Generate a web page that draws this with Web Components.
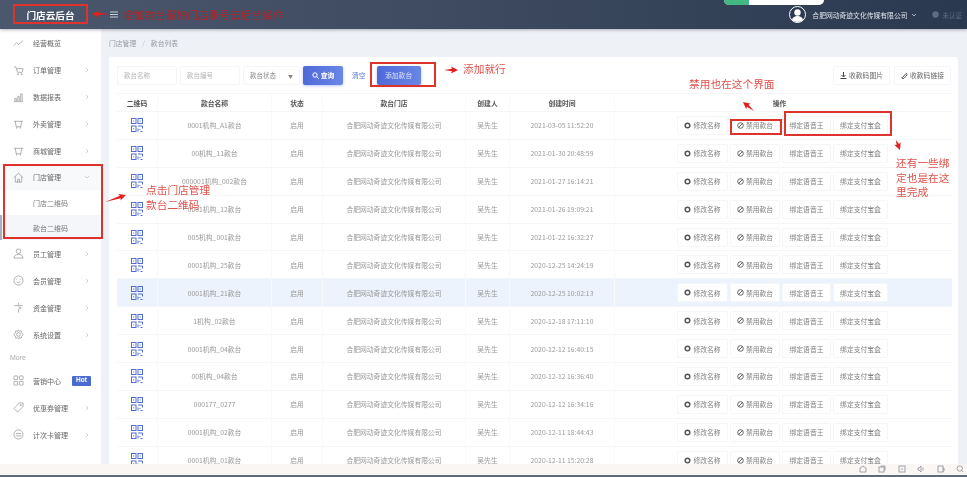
<!DOCTYPE html>
<html lang="zh">
<head>
<meta charset="utf-8">
<title>门店云后台</title>
<style>
  html, body { margin: 0; height: 477px; overflow: hidden; }
  body {
    position: relative;
    display: flex;
    flex-direction: column;
    background: #eef1f6;
    font-family: "Noto Sans CJK SC", "Liberation Sans", sans-serif;
    font-size: 7px;
    color: #777;
    filter: blur(0.45px);
  }
  .main { display: flex; height: 435px; overflow: hidden; }
  .content { flex: 1; min-width: 0; display: flex; flex-direction: column; padding: 0 9px 0 8px; }
</style>
</head>
<body>
  <top-bar></top-bar>
  <div class="main">
    <side-nav>
      <nav-item icon="trend" plain>经营概览</nav-item>
      <nav-item icon="cart">订单管理</nav-item>
      <nav-item icon="chart">数据报表</nav-item>
      <nav-item icon="shop">外卖管理</nav-item>
      <nav-item icon="shop">商城管理</nav-item>
      <nav-item icon="home" open>门店管理</nav-item>
      <nav-sub>门店二维码</nav-sub>
      <nav-sub active>款台二维码</nav-sub>
      <nav-item icon="user">员工管理</nav-item>
      <nav-item icon="smile">会员管理</nav-item>
      <nav-item icon="yen">资金管理</nav-item>
      <nav-item icon="gear">系统设置</nav-item>
      <nav-label>More</nav-label>
      <nav-item icon="grid" hot>营销中心</nav-item>
      <nav-item icon="tag">优惠券管理</nav-item>
      <nav-item icon="card">计次卡管理</nav-item>
    </side-nav>
    <div class="content">
      <page-crumb></page-crumb>
      <desk-list></desk-list>
    </div>
  </div>
  <bottom-strip></bottom-strip>
  <guide-overlay></guide-overlay>

<script>
const ICONS = {
  trend: '<path d="M1 8l3-3 2 2 5-4"/>',
  cart: '<path d="M1 2h2l2 6h5l1-4H4"/><circle cx="5.5" cy="10" r=".6"/><circle cx="9.5" cy="10" r=".6"/>',
  chart: '<path d="M1 10.5h10M2 10V7h1.6v3M5.2 10V5h1.6v5M8.4 10V2h1.6v8"/>',
  shop: '<path d="M1 2.5h10M2.5 2.5l1 6h5l1-6M4 8.5v2M8 8.5v2"/>',
  home: '<path d="M1 6l5-4.5L11 6M2.5 5v6h7V5M5 11V8h2v3"/>',
  user: '<circle cx="6" cy="3.5" r="2.5"/><path d="M1 11c.5-3 2.5-4 5-4s4.500 1 5 4z"/>',
  smile: '<circle cx="6" cy="6" r="5"/><path d="M4 7.500c1 1 3 1 4 0M4 4v1M8 4v1"/>',
  yen: '<path d="M6 1v2M1 4.500c1-1 9-1 10 0M6 5l3 1.500-3 1.500v3.500"/>',
  gear: '<circle cx="6" cy="6" r="2"/><path d="M6 1l1 1.500 2-.5.500 2L11 6l-1.500 2-.500 2-2-.500-1 1.500-1-1.500-2 .500-.500-2L1 6l1.500-2 .500-2 2 .500z"/>',
  grid: '<rect x="1" y="1" width="4" height="4" rx=".6"/><rect x="7" y="1" width="4" height="4" rx=".6"/><rect x="1" y="7" width="4" height="4" rx=".6"/><rect x="7" y="7" width="4" height="4" rx=".6"/>',
  tag: '<path d="M1 7l6-6h4v4l-6 6z"/><circle cx="8.500" cy="3.500" r=".7"/>',
  card: '<circle cx="6" cy="6" r="5"/><path d="M3 5h6M3 7.500h6"/>',
};

const fromHtml = (host, html) => {
  host.attachShadow({ mode: "open" }).innerHTML = html;
};

class TopBar extends HTMLElement {
  connectedCallback() {
    fromHtml(this, `
      <style>
        :host {
          display: flex; align-items: center; height: 29px; flex: none; position: relative; z-index: 2;
          background: linear-gradient(90deg, #4a576c 0%, #3e4b61 45%, #2b3950 100%);
          box-shadow: 0 1px 3px rgba(40,50,70,.35);
        }
        .logo { width: 101px; text-align: center; color: #fff; font-size: 9.6px; font-weight: 700; }
        .burger { margin-left: 9px; width: 8px; height: 7px; }
        .spacer { flex: 1; }
        .user { display: flex; align-items: center; gap: 6px; color: #dfe4ec; font-size: 6.800px; }
        .avatar { width: 17px; height: 17px; display: block; }
        .chev { width: 6px; height: 6px; margin-left: -3px; }
        .cert { display: flex; align-items: center; gap: 4px; margin: 0 5px 0 15px; color: #5f6c80; font-size: 6.500px; }
        .pill { position: absolute; left: 724px; top: 0; width: 100px; height: 5px; background: #fff; border-radius: 0 0 5px 5px; overflow: hidden; }
        .pill i { display: block; width: 25px; height: 100%; background: #43b883; }
      </style>
      <div class="logo">门店云后台</div>
      <svg class="burger" viewBox="0 0 8 7" stroke="#d5dae3" stroke-width=".9"><path d="M0 1h8M0 3.500h8M0 6h8"/></svg>
      <div class="spacer"></div>
      <div class="pill"><i></i></div>
      <div class="user">
        <svg class="avatar" viewBox="0 0 17 17"><circle cx="8.500" cy="8.500" r="8" fill="#2b3950" stroke="#fff"/><circle cx="8.500" cy="6.500" r="3.200" fill="#fff"/><path d="M3 14c.5-3 3-4 5.500-4s5 1 5.500 4c-3 2.500-8 2.500-11 0z" fill="#fff"/></svg>
        <span>合肥网动奇迹文化传媒有限公司</span>
        <svg class="chev" viewBox="0 0 6 6" fill="none" stroke="#c3cad6" stroke-width=".8"><path d="M1 2l2 2 2-2"/></svg>
      </div>
      <div class="cert">
        <svg width="7" height="7" viewBox="0 0 7 7"><circle cx="3.500" cy="3.500" r="3.200" fill="#5f6c80"/></svg>
        <span>未认证</span>
      </div>`);
  }
}

class SideNav extends HTMLElement {
  connectedCallback() {
    fromHtml(this, `
      <style>
        :host { display: flex; flex-direction: column; flex: none; width: 101px; padding-top: .5px; background: #fff; box-sizing: border-box; }
      </style>
      <slot></slot>`);
  }
}

class NavItem extends HTMLElement {
  connectedCallback() {
    const open = this.hasAttribute("open");
    const hot = this.hasAttribute("hot");
    const tail = this.hasAttribute("plain") ? "" : hot
      ? '<b class="hot">Hot</b>'
      : `<svg class="chev" viewBox="0 0 6 6"><path d="${open ? "M1 2l2 2 2-2" : "M2 1l2 2-2 2"}"/></svg>`;
    fromHtml(this, `
      <style>
        :host { display: flex; align-items: center; height: 27px; flex: none; padding-left: 13px; box-sizing: border-box; color: #666; font-size: 7px; position: relative; ${open ? "background:#f8f9fb;height:25.500px;" : ""} }
        .ico { width: 11px; height: 11px; fill: none; stroke: #888; stroke-width: .7; flex: none; }
        .txt { margin-left: 9px; }
        .chev { position: absolute; left: 84px; top: calc(50% - 3px); width: 6px; height: 6px; fill: none; stroke: #bbb; stroke-width: .7; }
        .hot { position: absolute; left: 72px; top: calc(50% - 5px); width: 19px; height: 10px; line-height: 10px; text-align: center; background: #4a6bd0; color: #fff; font: 700 6.500px "Liberation Sans", sans-serif; border-radius: 1px; }
      </style>
      <svg class="ico" viewBox="0 0 12 12">${ICONS[this.getAttribute("icon")] || ""}</svg>
      <span class="txt"><slot></slot></span>
      ${tail}`);
  }
}

class NavSub extends HTMLElement {
  connectedCallback() {
    const active = this.hasAttribute("active");
    fromHtml(this, `
      <style>
        :host { display: flex; align-items: center; height: 25px; flex: none; padding-left: 33px; color: #777; font-size: 7px; ${active ? "background:#f4f6fa;box-shadow: inset 2px 0 0 #a9b1c0;" : ""} }
      </style>
      <slot></slot>`);
  }
}

class NavLabel extends HTMLElement {
  connectedCallback() {
    fromHtml(this, `
      <style>
        :host { display: flex; align-items: center; height: 19px; padding-left: 10px; color: #aaa; font: 7px "Liberation Sans", sans-serif; }
      </style>
      <slot></slot>`);
  }
}

class PageCrumb extends HTMLElement {
  connectedCallback() {
    fromHtml(this, `
      <style>
        :host { display: flex; align-items: center; gap: 6px; height: 28px; flex: none; color: #969aa2; font-size: 6.800px; }
        i { font-style: normal; color: #c0c4cc; }
      </style>
      <span>门店管理</span><i>/</i><span>款台列表</span>`);
  }
}

class ToolButton extends HTMLElement {
  connectedCallback() {
    const kind = this.getAttribute("kind") || "plain";
    fromHtml(this, `
      <style>
        :host { display: inline-flex; align-items: center; justify-content: center; gap: 2px; height: 19px; box-sizing: border-box; border-radius: 2px; font-size: 6.800px; flex: none; white-space: nowrap; }
        :host([kind="plain"]) { background: #fff; border: 1px solid #f5f6f8; color: #808080; }
        :host([kind="primary"]) { background: linear-gradient(90deg, #4f6ad8, #6a86e6); color: #d8e0f8; box-shadow: 0 1px 3px rgba(80,110,220,.4); }
        svg { flex: none; }
      </style>
      <slot name="icon"></slot><slot></slot>`);
    this.setAttribute("kind", kind);
  }
}

class DeskRow extends HTMLElement {
  static columns = "41px 114px 51px 143px 44px 105px 1fr";
  connectedCallback() {
    const head = this.hasAttribute("head");
    const cols = (this.dataset.cols || "").split("|");
    const cells = cols.map((c, i) => {
      if (!head && i === 0) {
        return `<div class="cell"><svg width="12" height="14" viewBox="0 0 12 14" fill="none" stroke="#4f6ed0" stroke-width="1"><rect x=".5" y=".5" width="4.500" height="5"/><rect x="7" y=".5" width="4.500" height="5"/><rect x=".5" y="8" width="4.500" height="5.500"/><path d="M2.700 2.500v1M9.200 2.500v1M2.700 10.300v1M7 8h4.500v2.500M7 10.500v3M9.500 13.500h2M9 11v1"/></svg></div>`;
      }
      return `<div class="cell">${c}</div>`;
    }).join("");
    const actions = head ? '<div class="cell">操作</div>' : `
      <div class="actions">
        <tool-button kind="plain" style="width:51px"><svg slot="icon" width="7" height="7" viewBox="0 0 7 7"><circle cx="3.500" cy="3.500" r="2.300" fill="none" stroke="#555" stroke-width="1.500"/></svg>修改名称</tool-button>
        <tool-button kind="plain" style="width:50px"><svg slot="icon" width="7" height="7" viewBox="0 0 7 7" fill="none" stroke="#555" stroke-width=".9"><circle cx="3.500" cy="3.500" r="2.800"/><path d="M1.500 5.500l4-4"/></svg>禁用款台</tool-button>
        <tool-button kind="plain" style="width:49px">绑定语音王</tool-button>
        <tool-button kind="plain" style="width:55px">绑定支付宝盒</tool-button>
      </div>`;
    fromHtml(this, `
      <style>
        :host { display: grid; grid-template-columns: ${DeskRow.columns}; height: ${head ? "19px" : "27.900px"}; flex: none; box-sizing: border-box; border-bottom: 1px solid #f5f6f8; color: #999; font-size: 6.800px; }
        :host([head]) { color: #555; font-weight: 700; border-top: 1px solid #f5f6f8; }
        :host([hi]) { background: #ecf3fd; }
        .cell { display: flex; align-items: center; justify-content: center; border-right: 1px solid #f8f9fa; white-space: nowrap; }
        .cell:last-child { border-right: 0; padding-right: 8px; }
        .actions { display: flex; align-items: center; gap: 2px; padding-left: 62px; }
      </style>
      ${cells}${actions}`);
  }
}

class DeskList extends HTMLElement {
  connectedCallback() {
    const shop = "合肥网动奇迹文化传媒有限公司";
    const data = [
      ["0001机构_A1款台", "2021-03-05 11:52:20"],
      ["00机构_11款台", "2021-01-30 20:48:59"],
      ["000001机构_002款台", "2021-01-27 16:14:21"],
      ["0001机构_12款台", "2021-01-26 19:09:21"],
      ["005机构_001款台", "2021-01-22 16:32:27"],
      ["0001机构_25款台", "2020-12-25 14:24:19"],
      ["0001机构_21款台", "2020-12-25 10:02:13"],
      ["1机构_02款台", "2020-12-18 17:11:10"],
      ["0001机构_04款台", "2020-12-12 16:40:15"],
      ["00机构_04款台", "2020-12-12 16:36:40"],
      ["000177_0277", "2020-12-12 16:34:16"],
      ["0001机构_02款台", "2020-12-11 18:44:43"],
      ["0001机构_01款台", "2020-12-11 15:20:28"],
    ];
    const rows = data.map(([name, time], i) =>
      `<desk-row ${i === 6 ? "hi" : ""} data-cols="|${name}|启用|${shop}|吴先生|${time}"></desk-row>`).join("");
    fromHtml(this, `
      <style>
        :host { display: flex; flex-direction: column; flex: 1; min-height: 0; background: #fff; border-radius: 2px 2px 0 0; padding: 8px 6px 0 8px; overflow: hidden; }
        .tools { display: flex; align-items: center; gap: 3px; height: 20px; margin: 0 1px 8px 0; flex: none; color: #b4b4b4; font-size: 6.500px; }
        .field { width: 60px; height: 19px; box-sizing: border-box; border: 1px solid #f4f5f7; border-radius: 2px; display: flex; align-items: center; padding-left: 6px; }
        .select { width: 57px; color: #888; justify-content: space-between; padding-right: 6px; }
        .clear { color: #5a78dc; margin-left: 6px; margin-right: 8px; font-size: 6.800px; }
        .gap { flex: 1; }
      </style>
      <div class="tools">
        <div class="field">款台名称</div>
        <div class="field">款台编号</div>
        <div class="field select"><span>款台状态</span><span style="font-size:5px">▼</span></div>
        <tool-button kind="primary" style="width:40px;font-weight:700;color:#fff"><svg slot="icon" width="7" height="7" viewBox="0 0 7 7" fill="none" stroke="#fff" stroke-width="1"><circle cx="3" cy="3" r="2.200"/><path d="M4.600 4.600l2 2"/></svg>查询</tool-button>
        <span class="clear">清空</span>
        <tool-button kind="primary" style="width:44px">添加款台</tool-button>
        <div class="gap"></div>
        <tool-button kind="plain" style="width:57px;color:#666"><svg slot="icon" width="7" height="7" viewBox="0 0 7 7" fill="none" stroke="#444" stroke-width="1"><path d="M3.500 0v4.500M1.500 3l2 2 2-2M.5 6.500h6"/></svg>收款码图片</tool-button>
        <tool-button kind="plain" style="width:57px;color:#666;margin-left:1px"><svg slot="icon" width="7" height="7" viewBox="0 0 7 7" fill="none" stroke="#444" stroke-width=".9"><path d="M1.500 5.500l3.500-4a1 1 0 0 1 1 1.500L3 6.300a1.200 1.200 0 0 1-2-1.300"/></svg>收款码链接</tool-button>
      </div>
      <desk-row head data-cols="二维码|款台名称|状态|款台门店|创建人|创建时间"></desk-row>
      ${rows}`);
  }
}

class BottomStrip extends HTMLElement {
  connectedCallback() {
    const glyph = (d) => `<svg width="8" height="8" viewBox="0 0 8 8" fill="none" stroke="#8a8f98" stroke-width=".8">${d}</svg>`;
    fromHtml(this, `
      <style>
        :host { display: flex; align-items: center; justify-content: flex-end; gap: 11.500px; flex: none; height: 13px; box-sizing: border-box; padding: 0 3px 2px 0; background: #faf6f4; border-bottom: 2px solid #5c6a7c; position: relative; z-index: 2; }
      </style>
      ${glyph('<path d="M1 3l3-2 3 2v4H1z"/>')}
      ${glyph('<rect x="1" y="2" width="5" height="5"/><path d="M3 2V1h4v4H6"/>')}
      ${glyph('<rect x="1" y="1" width="6" height="6"/><path d="M3 4h2"/>')}
      ${glyph('<path d="M1 3v2h1l2 2V1L2 3zM6 2.500v3"/>')}
      ${glyph('<rect x="1" y="1" width="5" height="6"/><path d="M6 3h1v3H6"/>')}
      ${glyph('<circle cx="3.800" cy="3.500" r="2.700"/><path d="M5.800 5.500l1.500 1.500"/>')}`);
  }
}

class GuideOverlay extends HTMLElement {
  connectedCallback() {
    const box = (x, y, w, h) => `<div class="box" style="left:${x}px;top:${y}px;width:${w}px;height:${h}px"></div>`;
    const note = (x, y, w, text, cls = "") => `<div class="note ${cls}" style="left:${x}px;top:${y}px;width:${w}px">${text}</div>`;
    const arrow = (x1, y1, x2, y2) => {
      const a = Math.atan2(y2 - y1, x2 - x1);
      const p = (len, off) => `${x2 - len * Math.cos(a) - off * Math.sin(a)},${y2 - len * Math.sin(a) + off * Math.cos(a)}`;
      return `<polygon points="${x1},${y1} ${p(6, 1.300)} ${p(7, 3.500)} ${x2},${y2} ${p(7, -3.500)} ${p(6, -1.300)}"/>`;
    };
    fromHtml(this, `
      <style>
        :host { position: absolute; inset: 0; z-index: 5; pointer-events: none; display: block; }
        .box { position: absolute; box-sizing: border-box; border: 2px solid #e0322c; }
        .note { position: absolute; color: #e2504a; font-size: 10.700px; line-height: 14.500px; }
        .dark { color: #b02528; white-space: nowrap; }
        svg { position: absolute; inset: 0; width: 967px; height: 477px; fill: #e0201c; }
      </style>
      ${box(13, 4, 75, 20)}
      ${box(3, 164, 100, 75)}
      ${box(370, 62, 66, 25)}
      ${box(730, 119, 52, 16)}
      ${box(784, 111, 108, 25)}
      ${note(123, 8, 170, "增加款台最好门店账号云后台操作", "dark")}
      ${note(463, 62, 50, "添加就行")}
      ${note(689, 77, 90, "禁用也在这个界面")}
      ${note(146, 183, 66, "点击门店管理 款台二维码")}
      ${note(896, 156, 56, "还有一些绑定也是在这里完成")}
      <svg viewBox="0 0 967 477">
        ${arrow(109, 14, 92, 14)}
        ${arrow(444, 70, 458, 70)}
        ${arrow(754, 111, 743, 102)}
        ${arrow(896, 140, 900, 150)}
        ${arrow(105, 202, 126, 195)}
      </svg>`);
  }
}

customElements.define("top-bar", TopBar);
customElements.define("side-nav", SideNav);
customElements.define("nav-item", NavItem);
customElements.define("nav-sub", NavSub);
customElements.define("nav-label", NavLabel);
customElements.define("page-crumb", PageCrumb);
customElements.define("tool-button", ToolButton);
customElements.define("desk-row", DeskRow);
customElements.define("desk-list", DeskList);
customElements.define("bottom-strip", BottomStrip);
customElements.define("guide-overlay", GuideOverlay);
</script>
</body>
</html>
